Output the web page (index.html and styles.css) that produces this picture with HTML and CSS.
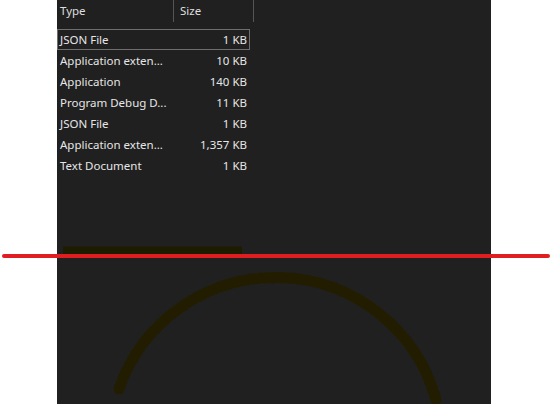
FILE: index.html
```html
<!DOCTYPE html>
<html>
<head>
<meta charset="utf-8">
<link rel="stylesheet" href="styles.css">
</head>
<body>
<div class="panel">
  <div class="header">
    <div class="hcell type">Type</div>
    <div class="hcell size">Size</div>
  </div>
  <div class="rows">
    <div class="row selected"><span class="c-type">JSON File</span><span class="c-size">1 KB</span></div>
    <div class="row"><span class="c-type">Application exten...</span><span class="c-size">10 KB</span></div>
    <div class="row"><span class="c-type">Application</span><span class="c-size">140 KB</span></div>
    <div class="row"><span class="c-type">Program Debug D...</span><span class="c-size">11 KB</span></div>
    <div class="row"><span class="c-type">JSON File</span><span class="c-size">1 KB</span></div>
    <div class="row"><span class="c-type">Application exten...</span><span class="c-size">1,357 KB</span></div>
    <div class="row"><span class="c-type">Text Document</span><span class="c-size">1 KB</span></div>
  </div>
  <svg class="canvas" width="434" height="228" viewBox="57 176 434 228">
    <defs>
      <filter id="soft" x="-10%" y="-10%" width="120%" height="120%">
        <feGaussianBlur stdDeviation="0.7"/>
      </filter>
    </defs>
    <rect x="63" y="246.5" width="179" height="8" fill="#1f1c00" filter="url(#soft)"/>
    <path d="M 119 389 A 166 166 0 0 1 436 400" fill="none" stroke="#221f01" stroke-width="11" stroke-linecap="round" filter="url(#soft)"/>
  </svg>
</div>
<div class="redline"></div>
</body>
</html>
```
FILE: styles.css
```css
html, body {
  margin: 0;
  padding: 0;
  background: #ffffff;
}
body {
  width: 551px;
  height: 404px;
  overflow: hidden;
  position: relative;
  font-family: "Noto Sans", "Open Sans", sans-serif;
  font-size: 11.5px;
}
.panel {
  margin-left: 57px;
  width: 434px;
  height: 404px;
  background: #202020;
  display: flex;
  flex-direction: column;
}
.header {
  display: flex;
  height: 22px;
  color: #dedede;
}
.hcell {
  line-height: 22px;
  padding-left: 3px;
  box-sizing: border-box;
  border-right: 1px solid #555555;
}
.hcell.type { width: 117px; }
.hcell.size { width: 80px; padding-left: 6px; }
.rows {
  margin-top: 7px;
  display: flex;
  flex-direction: column;
  width: 193px;
}
.row {
  display: flex;
  height: 21px;
  line-height: 20px;
  color: #e6e6e6;
  box-sizing: border-box;
  border: 1px solid transparent;
  padding: 0 2px;
}
.row.selected {
  border-color: #6e6e6e;
}
.c-type { width: 116px; white-space: nowrap; }
.c-size { flex: 1; text-align: right; white-space: nowrap; }
.canvas {
  display: block;
}
.redline {
  position: absolute;
  left: 2px;
  top: 254px;
  width: 548px;
  height: 4px;
  border-radius: 2px;
  background: #e01e22;
}
```
